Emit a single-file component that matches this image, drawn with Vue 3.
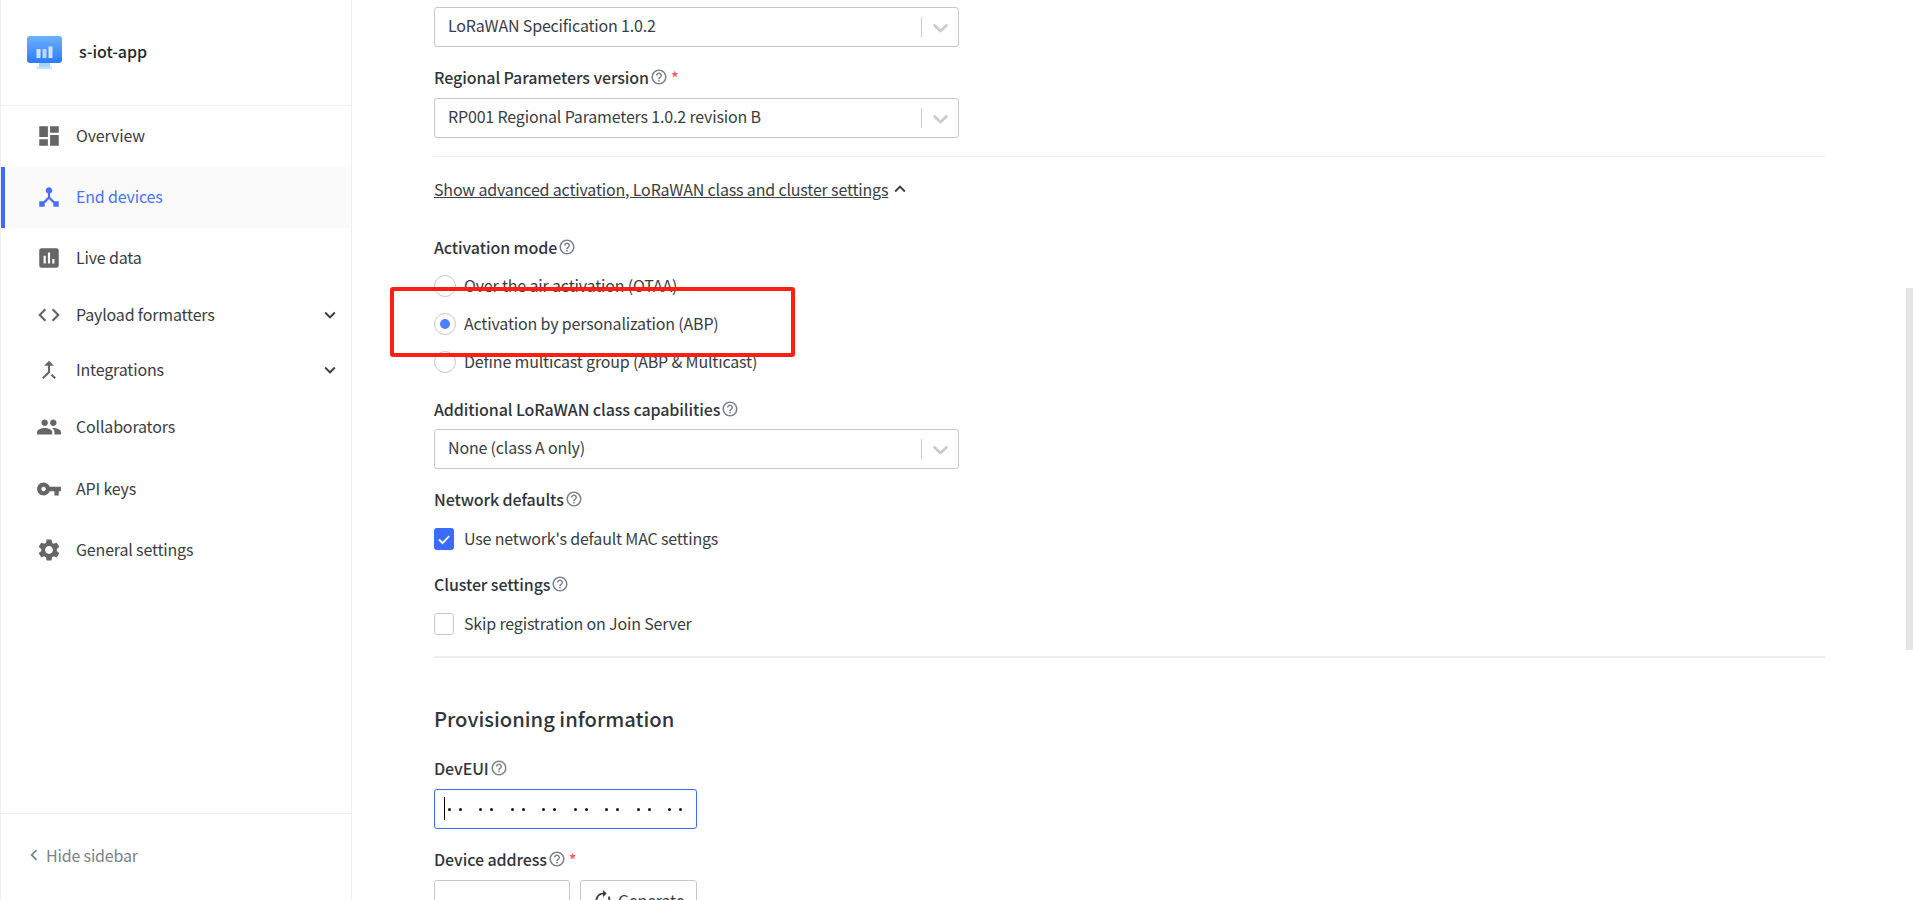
<script setup>
const icons = {
  dashboard: 'M3 13h8V3H3v10zm0 8h8v-6H3v6zm10 0h8V11h-8v10zm0-18v6h8V3h-8z',
  hub: 'M17 16l-4-4V8.82C14.16 8.4 15 7.3 15 6c0-1.66-1.34-3-3-3S9 4.34 9 6c0 1.3.84 2.4 2 2.82V12l-4 4H3v5h5v-3.05l4-4.2 4 4.2V21h5v-5h-4z',
  chart: 'M19 3H5c-1.1 0-2 .9-2 2v14c0 1.1.9 2 2 2h14c1.1 0 2-.9 2-2V5c0-1.1-.9-2-2-2zM9 17H7v-7h2v7zm4 0h-2V7h2v10zm4 0h-2v-4h2v4z',
  code: 'M9.4 16.6L4.8 12l4.6-4.6L8 6l-6 6 6 6 1.4-1.4zm5.2 0l4.6-4.6-4.6-4.6L16 6l6 6-6 6-1.4-1.4z',
  merge: 'M17 20.41L18.41 19 15 15.59 13.59 17 17 20.41zM7.5 8H11v5.59L5.59 19 7 20.41l6-6V8h3.5L12 3.5 7.5 8z',
  group: 'M16 11c1.66 0 2.99-1.34 2.99-3S17.66 5 16 5c-1.66 0-3 1.34-3 3s1.34 3 3 3zm-8 0c1.66 0 2.99-1.34 2.99-3S9.66 5 8 5C6.34 5 5 6.34 5 8s1.34 3 3 3zm0 2c-2.33 0-7 1.17-7 3.5V19h14v-2.5c0-2.33-4.67-3.5-7-3.5zm8 0c-.29 0-.62.02-.97.05 1.16.84 1.97 1.97 1.97 3.45V19h6v-2.5c0-2.33-4.67-3.5-7-3.5z',
  key: 'M12.65 10C11.83 7.67 9.61 6 7 6c-3.31 0-6 2.69-6 6s2.69 6 6 6c2.61 0 4.83-1.67 5.65-4H17v4h4v-4h2v-4H12.65zM7 14c-1.1 0-2-.9-2-2s.9-2 2-2 2 .9 2 2-.9 2-2 2z',
  settings: 'M19.14 12.94c.04-.3.06-.61.06-.94 0-.32-.02-.64-.07-.94l2.03-1.58c.18-.14.23-.41.12-.61l-1.92-3.32c-.12-.22-.37-.29-.59-.22l-2.39.96c-.5-.38-1.03-.7-1.62-.94l-.36-2.54c-.04-.24-.24-.41-.48-.41h-3.84c-.24 0-.43.17-.47.41l-.36 2.54c-.59.24-1.13.57-1.62.94l-2.39-.96c-.22-.08-.47 0-.59.22L2.74 8.87c-.12.21-.08.47.12.61l2.03 1.58c-.05.3-.09.63-.09.94s.02.64.07.94l-2.03 1.58c-.18.14-.23.41-.12.61l1.92 3.32c.12.22.37.29.59.22l2.39-.96c.5.38 1.03.7 1.62.94l.36 2.54c.05.24.24.41.48.41h3.84c.24 0 .44-.17.47-.41l.36-2.54c.59-.24 1.13-.56 1.62-.94l2.39.96c.22.08.47 0 .59-.22l1.92-3.32c.12-.22.07-.47-.12-.61l-2.01-1.58zM12 15.6c-1.98 0-3.6-1.62-3.6-3.6s1.62-3.6 3.6-3.6 3.6 1.62 3.6 3.6-1.62 3.6-3.6 3.6z'
}
const help = 'M11 18h2v-2h-2v2zm1-16C6.48 2 2 6.48 2 12s4.48 10 10 10 10-4.48 10-10S17.52 2 12 2zm0 18c-4.41 0-8-3.59-8-8s3.59-8 8-8 8 3.59 8 8-3.59 8-8 8zm0-14c-2.21 0-4 1.79-4 4h2c0-1.1.9-2 2-2s2 .9 2 2c0 2-3 1.75-3 5h2c0-2.25 3-2.5 3-5 0-2.21-1.79-4-4-4z'
const more = 'M16.59 8.59L12 13.17 7.41 8.59 6 10l6 6 6-6z'
const selectArrow = 'M4.516 7.548c0.436-0.446 1.043-0.481 1.576 0l3.908 3.747 3.908-3.747c0.533-0.481 1.141-0.446 1.576 0 0.436 0.445 0.408 1.197 0 1.615-0.406 0.418-4.695 4.502-4.695 4.502-0.217 0.223-0.502 0.335-0.787 0.335s-0.57-0.112-0.789-0.335c0 0-4.287-4.084-4.695-4.502s-0.436-1.17 0-1.615z'
const nav = [
  { label: 'Overview', icon: 'dashboard', h: 61 },
  { label: 'End devices', icon: 'hub', h: 61, active: true },
  { label: 'Live data', icon: 'chart', h: 62 },
  { label: 'Payload formatters', icon: 'code', h: 52, sub: true },
  { label: 'Integrations', icon: 'merge', h: 58, sub: true },
  { label: 'Collaborators', icon: 'group', h: 56 },
  { label: 'API keys', icon: 'key', h: 68 },
  { label: 'General settings', icon: 'settings', h: 54 }
]
const dots = Array.from({ length: 8 })
</script>

<template>
  <div class="page">
    <aside class="sidebar">
      <header class="brand">
        <svg class="logo" viewBox="0 0 35 33" width="35" height="33">
          <defs>
            <linearGradient id="lg" x1="0" y1="0" x2="0" y2="1">
              <stop offset="0" stop-color="#6bb2fd" />
              <stop offset="1" stop-color="#2a7bfe" />
            </linearGradient>
          </defs>
          <rect x="0" y="0" width="35" height="27" rx="3" fill="url(#lg)" />
          <rect x="12" y="27" width="11" height="4" fill="#a6d3ff" />
          <rect x="10" y="31" width="15" height="2" fill="#c4e2ff" />
          <rect x="9.5" y="13" width="4" height="9" fill="#cfe5ff" />
          <rect x="15.5" y="13" width="4" height="9" fill="#b5d6fe" />
          <rect x="21.5" y="10.5" width="4" height="11.5" fill="#cfe5ff" />
        </svg>
        <span class="brand-name">s-iot-app</span>
      </header>
      <nav class="nav">
        <a v-for="item in nav" :key="item.label" class="nav-item" :class="{ active: item.active }" :style="{ height: item.h + 'px' }">
          <svg class="nav-icon" viewBox="0 0 24 24"><path :d="icons[item.icon]" /></svg>
          <span class="nav-label">{{ item.label }}</span>
          <svg v-if="item.sub" class="nav-caret" viewBox="0 0 24 24"><path :d="more" /></svg>
        </a>
      </nav>
      <footer class="side-foot">
        <svg class="hide-icon" viewBox="0 0 24 24"><path d="M15.41 7.41L14 6l-6 6 6 6 1.41-1.41L10.83 12z" /></svg>
        <span>Hide sidebar</span>
      </footer>
    </aside>

    <main class="main">
      <div class="select first">
        <span class="select-value">LoRaWAN Specification 1.0.2</span>
        <i class="select-sep"></i>
        <svg class="select-arrow" viewBox="0 0 20 20"><path :d="selectArrow" /></svg>
      </div>

      <label class="label l-regional">Regional Parameters version
        <svg class="help" viewBox="0 0 24 24"><path :d="help" /></svg><b class="req">*</b>
      </label>
      <div class="select">
        <span class="select-value">RP001 Regional Parameters 1.0.2 revision B</span>
        <i class="select-sep"></i>
        <svg class="select-arrow" viewBox="0 0 20 20"><path :d="selectArrow" /></svg>
      </div>

      <hr class="rule r1" />

      <div class="advanced">
        <span class="adv-link">Show advanced activation, LoRaWAN class and cluster settings</span>
        <svg class="adv-caret" viewBox="0 0 24 24"><path d="M12 8l-6 6 1.41 1.41L12 10.83l4.59 4.58L18 14z" /></svg>
      </div>

      <label class="label l-mode">Activation mode
        <svg class="help" viewBox="0 0 24 24"><path :d="help" /></svg>
      </label>
      <div class="radios">
        <div class="choice"><i class="radio"></i><span>Over the air activation (OTAA)</span></div>
        <div class="choice"><i class="radio on"></i><span>Activation by personalization (ABP)</span></div>
        <div class="choice"><i class="radio"></i><span>Define multicast group (ABP &amp; Multicast)</span></div>
      </div>

      <label class="label l-class">Additional LoRaWAN class capabilities
        <svg class="help" viewBox="0 0 24 24"><path :d="help" /></svg>
      </label>
      <div class="select">
        <span class="select-value">None (class A only)</span>
        <i class="select-sep"></i>
        <svg class="select-arrow" viewBox="0 0 20 20"><path :d="selectArrow" /></svg>
      </div>

      <label class="label l-net">Network defaults
        <svg class="help" viewBox="0 0 24 24"><path :d="help" /></svg>
      </label>
      <div class="choice c-check">
        <i class="check on">
          <svg viewBox="0 0 20 22" width="20" height="22"><path d="M5 11.5l3.6 3.6L15.2 8" fill="none" stroke="#fff" stroke-width="1.8" /></svg>
        </i>
        <span>Use network's default MAC settings</span>
      </div>

      <label class="label l-cluster">Cluster settings
        <svg class="help" viewBox="0 0 24 24"><path :d="help" /></svg>
      </label>
      <div class="choice c-check">
        <i class="check"></i>
        <span>Skip registration on Join Server</span>
      </div>

      <hr class="rule r2" />

      <h2 class="section">Provisioning information</h2>

      <label class="label l-dev">DevEUI
        <svg class="help" viewBox="0 0 24 24"><path :d="help" /></svg>
      </label>
      <div class="byte-input">
        <i class="cursor"></i>
        <span v-for="(d, i) in dots" :key="i" class="pair"><i></i><i></i></span>
      </div>

      <label class="label l-addr">Device address
        <svg class="help" viewBox="0 0 24 24"><path :d="help" /></svg><b class="req">*</b>
      </label>
      <div class="addr-row">
        <div class="addr-input"></div>
        <button class="gen">
          <svg class="gen-icon" viewBox="0 0 24 24"><path d="M12 6v3l4-4-4-4v3c-4.42 0-8 3.58-8 8 0 1.57.46 3.03 1.24 4.26L6.7 14.8c-.45-.83-.7-1.79-.7-2.8 0-3.31 2.69-6 6-6zm6.76 1.74L17.3 9.2c.44.84.7 1.79.7 2.8 0 3.31-2.69 6-6 6v-3l-4 4 4 4v-3c4.42 0 8-3.58 8-8 0-1.57-.46-3.03-1.24-4.26z" /></svg>
          <span>Generate</span>
        </button>
      </div>
    </main>

    <div class="scrollbar"></div>
    <div class="callout"></div>
  </div>
</template>

<style>
html, body { margin: 0; background: #fff; overflow: hidden; }
</style>

<style scoped>
.page {
  position: relative;
  display: flex;
  width: 1913px;
  height: 900px;
  overflow: hidden;
  background: #fff;
  color: #32353a;
  font-family: "Noto Sans CJK SC", "Noto Sans", sans-serif;
  font-size: 16px;
  line-height: 24px;
  letter-spacing: -0.17px;
}
.sidebar {
  flex: 0 0 352px;
  box-sizing: border-box;
  height: 900px;
  display: flex;
  flex-direction: column;
  border-left: 1px solid #eee;
  border-right: 1px solid #eee;
}
.brand {
  flex: 0 0 106px;
  display: flex;
  align-items: center;
  padding: 0 0 0 26px;
  box-sizing: border-box;
  border-bottom: 1px solid #eee;
}
.logo { flex: none; }
.brand-name { margin: 0 0 3px 17px; font-weight: 500; color: #26282c; letter-spacing: -0.05px; }
.nav { flex: 1; }
.nav-item {
  display: flex;
  align-items: center;
  box-sizing: border-box;
  padding: 0 10px 2px 35px;
  color: #3a3d43;
}
.nav-item.active {
  background: #fafafa;
  color: #4c72f8;
  border-left: 4px solid #3a6cff;
  padding-left: 31px;
}
.nav-icon { width: 26px; height: 26px; flex: none; fill: #666; }
.active .nav-icon { fill: #4c6ef8; }
.nav-label { margin: 0 0 2px 14px; flex: 1; }
.nav-caret { width: 22px; height: 22px; fill: #3a3d43; }
.side-foot {
  flex: 0 0 87px;
  box-sizing: border-box;
  display: flex;
  align-items: center;
  padding: 0 0 4px 22px;
  border-top: 1px solid #eee;
  color: #7d8289;
}
.hide-icon { width: 22px; height: 22px; fill: #7d8289; margin-right: 1px; }

.main {
  flex: 1;
  min-width: 0;
  box-sizing: border-box;
  height: 900px;
  padding: 7px 88px 0 82px;
  overflow: hidden;
}
.select {
  box-sizing: border-box;
  width: 525px;
  height: 40px;
  display: flex;
  align-items: center;
  border: 1px solid #c8c8c8;
  border-radius: 3px;
  padding: 0 3px 0 13px;
}
.select-value { flex: 1; padding-bottom: 5px; color: #3a3d43; }
.select-sep { width: 1px; height: 20px; background: #ccc; }
.select-arrow { width: 25px; height: 25px; fill: #ccc; margin: 1px 2px 0 6px; }
.label {
  display: flex;
  align-items: center;
  font-weight: 500;
  height: 24px;
  color: #32353a;
  letter-spacing: -0.1px;
}
.help { width: 18px; height: 18px; fill: #7d8289; margin: 0 0 0 1px; flex: none; }
.req { color: #ff5a5f; font-weight: 500; margin-left: 3px; }
.l-regional { margin: 18px 0 9px; }
.rule { border: 0; margin: 0; background: #eee; height: 1px; }
.r1 { margin-top: 18px; }
.advanced {
  display: flex;
  align-items: center;
  margin-top: 20px;
}
.adv-link { text-decoration: underline; color: #3a3d43; }
.adv-caret { width: 22px; height: 22px; fill: #3a3d43; margin-left: 1px; }
.l-mode { margin-top: 34px; }
.radios { margin-top: 8px; }
.choice { display: flex; align-items: center; color: #3a3d43; }
.choice span { padding-bottom: 2px; }
.radios .choice { height: 38px; }
.radio {
  box-sizing: border-box;
  width: 22px;
  height: 22px;
  border-radius: 50%;
  border: 1px solid #c8c8c8;
  margin-right: 8px;
  flex: none;
  display: flex;
  align-items: center;
  justify-content: center;
}
.radio.on::after {
  content: "";
  width: 10px;
  height: 10px;
  border-radius: 50%;
  background: #4c7ffb;
}
.l-class { margin-top: 16px; margin-bottom: 8px; }
.l-net { margin-top: 18px; }
.c-check { margin-top: 16px; height: 24px; }
.check {
  box-sizing: border-box;
  width: 20px;
  height: 22px;
  border: 1px solid #c8c8c8;
  border-radius: 3px;
  margin-right: 10px;
  flex: none;
  display: block;
}
.check.on { background: #3a6cff; border: 0; }
.check svg { display: block; }
.l-cluster { margin-top: 21px; }
.r2 { height: 2px; margin-top: 20px; }
.section { margin: 45px 0 0; font-size: 20.2px; line-height: 32px; font-weight: 500; color: #32353a; letter-spacing: 0; }
.l-dev { margin-top: 21px; margin-bottom: 9px; }
.byte-input {
  position: relative;
  box-sizing: border-box;
  width: 263px;
  height: 40px;
  border: 1px solid #3a6cff;
  border-radius: 3px;
  display: flex;
  align-items: center;
  padding-left: 12.5px;
}
.cursor { position: absolute; left: 9px; top: 7px; width: 1px; height: 23px; background: #000; }
.pair { display: flex; width: 31.5px; flex: none; }
.pair i { width: 3px; height: 3px; border-radius: 50%; background: #111; margin-right: 8px; }
.l-addr { margin-top: 18px; margin-bottom: 9px; }
.addr-row { display: flex; gap: 10px; }
.addr-input {
  box-sizing: border-box;
  width: 136px;
  height: 40px;
  border: 1px solid #c8c8c8;
  border-radius: 3px;
}
.gen {
  box-sizing: border-box;
  width: 117px;
  height: 40px;
  border: 1px solid #c8c8c8;
  border-radius: 3px;
  background: #fff;
  display: flex;
  align-items: center;
  padding: 0 0 0 11px;
  font: inherit;
  letter-spacing: -0.17px;
  color: #3a3d43;
}
.gen-icon { width: 22px; height: 22px; fill: #3a3d43; margin-right: 4px; flex: none; }
.scrollbar {
  position: absolute;
  left: 1906px;
  top: 288px;
  width: 7px;
  height: 362px;
  background: #e5e5e5;
}
.callout {
  position: absolute;
  left: 390px;
  top: 287px;
  width: 405px;
  height: 70px;
  box-sizing: border-box;
  border: 4px solid #fd1f14;
  border-radius: 3px;
}
</style>
